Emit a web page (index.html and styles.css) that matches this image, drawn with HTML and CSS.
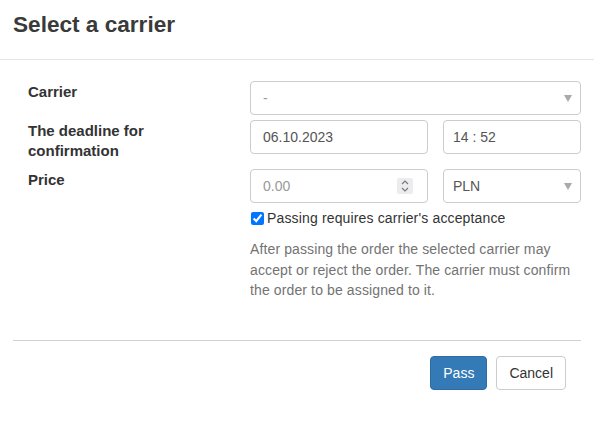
FILE: index.html
```html
<!DOCTYPE html>
<html>
<head>
<meta charset="utf-8">
<link rel="stylesheet" href="styles.css">
</head>
<body>
<div class="modal">
  <div class="modal-header">
    <h4 class="modal-title">Select a carrier</h4>
  </div>
  <div class="modal-body">
    <div class="form-row row-carrier">
      <label class="form-label">Carrier</label>
      <div class="control select placeholder"><span>-</span><span class="caret"></span></div>
    </div>
    <div class="form-row row-deadline">
      <label class="form-label">The deadline for confirmation</label>
      <div class="pair">
        <div class="control"><span>06.10.2023</span></div>
        <div class="control time"><span>14 : 52</span></div>
      </div>
    </div>
    <div class="form-row row-price">
      <label class="form-label">Price</label>
      <div class="pair">
        <div class="control number placeholder"><span>0.00</span>
          <span class="spinner">
            <svg width="10" height="14" viewBox="0 0 10 14"><path d="M2 5 L5 2 L8 5" fill="none" stroke="#777" stroke-width="1.1"/><path d="M2 9 L5 12 L8 9" fill="none" stroke="#777" stroke-width="1.1"/></svg>
          </span>
        </div>
        <div class="control select time"><span>PLN</span><span class="caret"></span></div>
      </div>
    </div>
    <div class="form-row row-check">
      <span></span>
      <div class="check-wrap">
        <label class="check"><input type="checkbox" checked> Passing requires carrier's acceptance</label>
        <p class="help">After passing the order the selected carrier may accept or reject the order. The carrier must confirm the order to be assigned to it.</p>
      </div>
    </div>
  </div>
  <div class="modal-footer">
    <button class="btn btn-primary">Pass</button>
    <button class="btn btn-default">Cancel</button>
  </div>
</div>
</body>
</html>
```

FILE: styles.css
```css
html, body {
  margin: 0;
  padding: 0;
  background: #fff;
}
body {
  font-family: "Liberation Sans", Arial, sans-serif;
  font-size: 14px;
  line-height: 20px;
  color: #333;
}
.modal {
  width: 594px;
}
.modal-header {
  height: 60px;
  box-sizing: border-box;
  padding: 12px 13px 0;
  border-bottom: 1px solid #e5e5e5;
}
.modal-title {
  margin: 0;
  font-size: 22.6px;
  line-height: 25px;
  font-weight: bold;
  color: #3a3a3a;
}
.modal-body {
  padding: 21px 13px 39px 28px;
}
.form-row {
  display: grid;
  grid-template-columns: 192px 1fr;
  column-gap: 30px;
  align-items: start;
}
.row-carrier { margin-bottom: 5px; }
.row-deadline { margin-bottom: 9px; }
.row-price { margin-bottom: 5px; }
.form-label {
  font-weight: bold;
  font-size: 15px;
  line-height: 19.5px;
  padding-top: 1px;
  color: #333;
}
.pair {
  display: grid;
  grid-template-columns: 178px 1fr;
  column-gap: 15px;
}
.control {
  height: 34px;
  box-sizing: border-box;
  border: 1px solid #ccc;
  border-radius: 4px;
  padding: 0 12px;
  display: flex;
  align-items: center;
  justify-content: space-between;
  color: #555;
  background: #fff;
}
.control.time {
  padding-left: 9px;
}
.placeholder span:first-child {
  color: #999;
}
.select {
  padding-right: 8px;
}
.caret {
  width: 0;
  height: 0;
  border-left: 4px solid transparent;
  border-right: 4px solid transparent;
  border-top: 7px solid #aaa;
}
.number {
  padding-right: 14px;
}
.spinner {
  width: 16px;
  height: 16px;
  background: #ececef;
  display: flex;
  align-items: center;
  justify-content: center;
  border-radius: 2px;
}
.check {
  display: flex;
  align-items: center;
  height: 20px;
  color: #333;
  letter-spacing: 0.15px;
}
.check input {
  width: 13px;
  height: 13px;
  margin: 0 3px 0 1px;
  accent-color: #0075ff;
}
.help {
  margin: 11px 0 0;
  color: #737373;
  line-height: 20.5px;
  letter-spacing: 0.12px;
}
.modal-footer {
  margin: 0 13px;
  border-top: 1px solid #d2d2d2;
  padding: 15px 15px 0;
  display: flex;
  justify-content: flex-end;
  gap: 9px;
}
.btn {
  font-family: "Liberation Sans", Arial, sans-serif;
  font-size: 14px;
  line-height: 20px;
  padding: 6px 12px;
  border-radius: 4px;
  border: 1px solid #ccc;
  background: #fff;
  color: #333;
  margin: 0;
}
.btn-primary {
  background: #337ab7;
  border-color: #2e6da4;
  color: #fff;
}
```
